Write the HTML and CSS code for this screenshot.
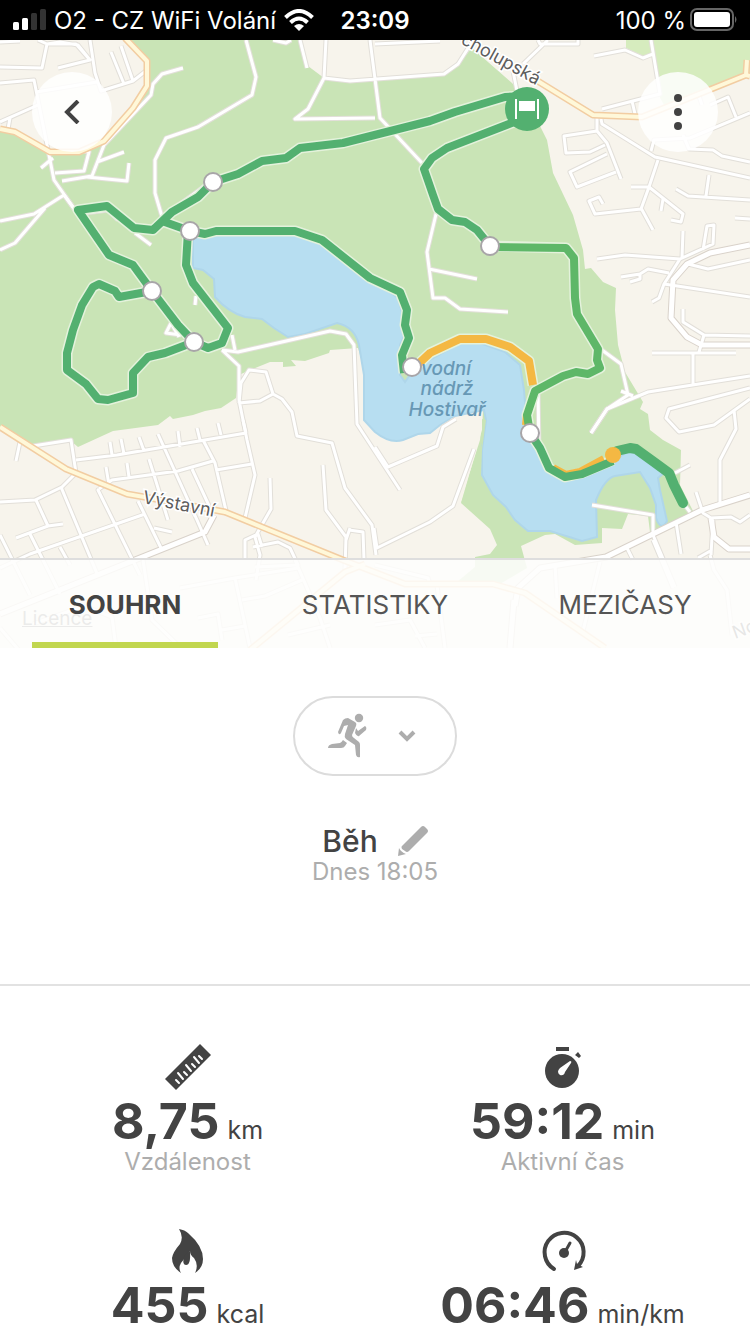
FILE: index.html
```html
<!DOCTYPE html>
<html lang="cs">
<head>
  <meta charset="UTF-8" />
  <meta name="viewport" content="width=device-width, initial-scale=1.0" />
  <title>Běh</title>
  <link rel="stylesheet" href="styles.css">
</head>
<body>
  <header class="status">
    <div class="status-left">
      <svg class="signal" viewBox="0 0 34 22" aria-hidden="true">
        <g fill="#fff"><rect x="1" y="13" width="6" height="8" rx="1.5" /><rect x="10" y="9" width="6" height="12" rx="1.5" /></g>
        <g fill="#333"><rect x="19" y="4" width="6" height="17" rx="1.5" /><rect x="28" y="0" width="6" height="21" rx="1.5" /></g>
      </svg>
      <span>O2 - CZ WiFi Volání</span>
      <svg class="wifi" viewBox="0 0 30 22" aria-hidden="true">
        <g fill="none" stroke="#fff" stroke-width="4">
          <path d="M1.5 8.5Q15-4.500 28.500 8.500" />
          <path d="M6.500 13.500Q15 5.500 23.500 13.500" />
        </g>
        <path d="M15 22L10 17Q15 13 20 17Z" fill="#fff" />
      </svg>
    </div>
    <strong class="clock">23:09</strong>
    <div class="status-right">
      <span>100 %</span>
      <svg class="battery" viewBox="0 0 48 24" aria-hidden="true">
        <rect x="1" y="1" width="42" height="21" rx="6" fill="none" stroke="#666" stroke-width="2" />
        <rect x="4" y="4" width="36" height="15" rx="3" fill="#fff" />
        <path d="M45 8Q48 11.500 45 15Z" fill="#666" />
      </svg>
    </div>
  </header>

  <section class="map">
    <svg class="map-canvas" viewBox="0 40 750 608" preserveAspectRatio="xMidYMid slice" role="img" aria-label="Mapa trasy">
      <defs>
        <g id="streets">
          <!-- north west -->
          <path d="M0 67L42 68L47 44L76 44L90 60M38 40L47 44L60 42L78 45L90 60L58 68M90 40L95 73L101 91L133 81L147 70M111 52L124 84M121 46L133 81M0 83L34 80L54 180L75 210M0 122L38 105M8 129L10 118M36 92L97 82M0 42L20 41" />
          <path d="M183 68L162 74L153 84L151 95L104 145L92 176L62 181M53 158L41 168M55 173L84 171L89 152L82 151M97 162L124 152M87 177L127 181L129 163M75 210L64 195L34 214L0 221M45 208L15 243L0 250M85 213L108 210L118 220M135 233L151 245M246 40L256 77L252 95L198 127L166 138L155 160L155 193L163 220M172 210L213 180M196 296L195 305" />
          <path d="M300 40L307 68M326 40L324 78L308 109L295 119L375 118M324 78L350 81L444 74L458 64L472 42M375 44L440 41M370 40L380 118L422 163M273 40L286 43L291 40M437 210L427 252L433 298L445 298L460 309L508 312M429 269L477 279M513 71L518 96" />
          <!-- lake side -->
          <path d="M222 350L238 352L330 331L346 334L354 345L357 424L400 490M222 350L239 366L239 400L247 440L255 475L245 518M232 335L235 350M239 403L260 401L273 394L266 372L249 370L241 383L239 403M273 394L282 399L292 412L297 436L332 443L345 488L372 525L376 555M171 323L166 333L181 335M171 323L179 337" />
          <path d="M375 447L388 467L437 446L443 427L456 419M474 449L453 506L430 522L377 548L374 528M538 390L539 450M602 350L621 364L628 395L607 409L591 433M621 391L633 396M592 505L653 515L653 535L675 587" />
          <!-- south west -->
          <path d="M16 461L20 442M33 446L71 440L76 473L62 487L35 500L0 502M76 460L117 455L246 433M110 442L112 455M121 439L124 454M139 437L144 451M158 434L197 520L208 545M178 431L180 447M197 428L200 440M218 423L221 435M203 440L215 463L227 515M243 420L246 433M106 467L109 485M127 463L129 477M149 459L168 520M99 489L112 480L178 471L213 461M192 469L212 512M216 470L252 464M323 465L326 510L346 537M270 478L271 509L255 537L260 555L256 580M245 560L245 540L258 534L262 547M253 547L278 542L290 548L298 565L255 567M346 537L345 570M350 528L346 540M349 530L363 532L364 560" />
          <path d="M99 489L98 490L140 575M138 501L162 550M36 500L48 526L63 524M48 526L16 538M30 534L60 594M61 487L98 576M0 535L30 595M0 568L30 554L145 514M60 547L70 565M154 528L172 532" />
          <path d="M143 560L152 620L181 648M0 628L23 655M33 624L84 606L112 617L116 648M180 588L235 578L298 568M235 578L250 648M242 600L265 596L302 580M295 560L320 618L330 648M198 618L218 614L222 640M222 630L245 626M288 635L330 625" />
          <path d="M375 565L428 578L430 585M437 585L445 648M375 625L410 620L425 648M415 636L437 634M555 565L557 598M600 562L582 635M653 540L673 588M710 555L714 570L727 590L732 635" />
          <!-- north east -->
          <path d="M523 64L548 40M538 40L540 44L578 44L578 40M594 56L625 50L643 58L653 54M651 40L660 94L602 109M632 101L635 114M597 118L597 131L607 143L621 179M597 131L564 136L566 153L590 152L605 145M607 154L570 172L577 187L616 172M601 119L602 124L655 157L750 178M651 151L654 140L690 138L750 113M683 135L689 149L713 150L722 156L750 162M710 105L728 97L736 117M699 96L702 105M658 160L649 187L641 209L595 214L589 201L599 197L603 204M631 187L649 187L683 214L681 222L671 220M641 208L653 230M663 199L661 211M709 175L706 196M676 189L688 196L750 200" />
          <path d="M597 259L625 255L680 259L713 244L714 225L707 226L703 250M682 258L683 231M680 259L664 284L659 298L652 302M664 284L750 297M688 264L708 269L750 260M621 277L640 274L648 269L669 273M640 275L640 279L630 282M735 218L750 219M683 309L683 322L704 335L750 336M704 335L699 352M652 353L736 353M693 353L693 384M591 433L607 409L648 392L750 376M750 388L669 409L666 418L679 432L714 425L750 399M734 410L736 429L720 460L720 503M675 473L690 465M696 492L703 513L711 518L731 517L740 522L750 515M676 522L681 554M627 548L633 560M711 555L713 520M698 558L712 550" />
          <path d="M690 512L683 503" />
        </g>
        <g id="streets-wide">
          <path d="M0 614L205 532L214 515M510 648L514 600M515 606L518 588L540 568L606 557L702 510L750 495M711 518L714 537L729 549L750 549M750 245L710 253L687 264L673 280L671 318L687 337L702 345L750 345" />
        </g>
        <g id="main-roads">
          <path d="M125 38L147 61L147 86L133 108L104 141L79 152L50 152L15 132L0 129M0 427L66 469L127 494L150 498L225 512L343 560L405 584L493 584L525 593L605 648M536 80L593 115L642 117L746 75L750 76M746 75L747 60M250 650L345 572L365 564" />
        </g>
      </defs>

      <rect x="0" y="40" width="750" height="608" fill="#f7f4ec" />
      <path fill="#c9e4b6" d="M125 40L147 61L147 86L133 108L104 141L79 152L50 152L15 132L0 129V427L32 447L71 441L78 447L113 431L158 425L170 416L173 419L193 415L205 411L221 408L236 398L239 375L250 370L270 362L283 362V367L296 366L291 360L305 361L329 353L330 350L358 348L370 390L483 410L482 430L461 503L490 529L497 545L490 554L475 557V567L457 582L500 584L527 568L521 546L545 535L555 534L575 545L602 543V528L622 529L628 514L648 516L650 532L694 513L680 485L681 450L663 440L650 430L648 414L640 409L643 402L625 372L618 345L615 310L616 288L603 282L591 268L585 269L583 250L573 215L553 173L547 140L527 100L512 83L472 48L458 64L444 74L350 82L324 78L308 66L300 40Z" />
      <path fill="#d6ecbe" d="M626 40H750V76L664 105L658 94L653 55L645 57L626 48Z" />
      <path class="water" d="M193 235V268L203 270L214 279L215 297Q228 312 245 317L262 319L274 328L288 337L305 334L337 323Q355 327 359 345L364 375L364 420L375 432Q390 444 403 440L418 434L430 433L440 425L455 416L484 410L486 420L482 450V475L493 495L506 507L515 520L528 531L550 531L582 541L597 537L596 500Q605 478 615 476L640 472L650 488L656 505V518Q661 532 667 521L660 490L658 478L665 472L650 460L630 450L612 462L590 473L565 480L550 470L537 440L527 428L524 390L520 365L505 352L480 343H460L430 360L412 372L405 382L400 375V345L407 330L398 298L365 275L322 243L290 234Z" />
      <path d="M438 434L452 418L482 420L480 440L460 503L440 500L430 450Z" fill="#f7f4ec" />
      <path d="M482 419V445L461 503L481 475L482 450L486 420Z" fill="#c9e4b6" />

      <use href="#streets" class="road-case" />
      <use href="#streets-wide" class="road-case wide" />
      <use href="#streets" class="road" />
      <use href="#streets-wide" class="road wide" />
      <use href="#main-roads" class="main-case" />
      <use href="#main-roads" class="main-road" />

      <!-- recorded track -->
      <g class="track-glow">
        <path d="M530 433L527 415L535 391L563 376L576 372L588 374L600 368L597 360L598 349L577 314L575 298L574 258L566 248L490 246L477 230L465 222L452 220L438 209L433 195L424 169L432 158L447 148L527 117" />
        <path d="M527 96L505 97L455 112L430 121L343 143L300 148L286 158L262 161L238 174L213 182L198 197L172 212L153 230L134 228L107 206L78 210L109 255L133 265L152 291L178 325L194 342L208 348L222 343L228 328L193 283L186 265L188 231" />
        <path d="M162 221L190 231L205 234L216 231H295L322 240L370 278L400 292L407 310L405 325L409 338L402 355L404 373M152 291L119 297L115 291L99 284L93 287L82 305L73 330L67 353V370L86 384L98 399L108 400L133 393V373L148 357L165 353L194 342" />
        <path d="M414 368L430 353L460 339H486L510 347L529 361L533 385M530 433L540 448L549 468L565 477L582 473L613 460" />
      </g>
      <g class="track">
        <path d="M414 368L430 353L460 339H486L510 347L529 361L533 385M527 414L526 425M553 468L566 475L580 472L604 459" class="slow" />
        <path d="M530 433L527 415L535 391L563 376L576 372L588 374L600 368L597 360L598 349L577 314L575 298L574 258L566 248L490 247" class="fast" />
        <path d="M490 246L477 230L465 222L452 220L438 209L433 195L424 169L432 158L447 148L527 117M527 96L505 97L455 112L430 121L343 143L300 148L286 158L262 161L238 174L213 182L198 197L172 212L153 230L134 228L107 206L78 210L109 255L133 265L152 291L178 325L194 342L208 348L222 343L228 328L193 283L186 265L188 231" />
        <path d="M162 221L190 231L205 234L216 231H295L322 240L370 278L400 292L407 310L405 325L409 338L402 355L404 373M152 291L119 297L115 291L99 284L93 287L82 305L73 330L67 353V370L86 384L98 399L108 400L133 393V373L148 357L165 353L194 342" />
        <path d="M530 433L540 448L549 468L565 477L582 474L613 461" />
        <path d="M617 451L630 448L636 449L654 462L669 473L674 485L683 503" class="finish" />
      </g>

      <g class="map-label">
        <text transform="translate(460 43) rotate(29)">cholupská</text>
        <text transform="translate(142 503) rotate(11)">Výstavní</text>
        <text transform="translate(735 639) rotate(-20)">Nová</text>
      </g>
      <g class="water-label">
        <text x="446" y="375">vodní</text>
        <text x="447" y="395">nádrž</text>
        <text x="447" y="416">Hostivař</text>
      </g>

      <g fill="#fff" stroke="#a8a5a8" stroke-width="2">
        <circle cx="213" cy="182" r="9" />
        <circle cx="190" cy="231" r="9" />
        <circle cx="152" cy="291" r="9" />
        <circle cx="194" cy="342" r="9" />
        <circle cx="412" cy="367" r="9" />
        <circle cx="490" cy="246" r="9" />
        <circle cx="530" cy="433" r="9" />
      </g>
      <circle cx="613" cy="455" r="8" fill="#f4b843" />
      <circle cx="527" cy="109" r="22" fill="#53b070" />
      <path d="M515 99h2v20h-2zM537 99h2v20h-2zM519 101h16v10h-16z" fill="#fff" />
    </svg>
    <a class="licence" href="#">Licence</a>

    <button class="round-btn back" aria-label="Zpět">
      <svg viewBox="0 0 24 24"><path d="M18 1L7 12L18 23" fill="none" stroke="#424242" stroke-width="4" /></svg>
    </button>
    <button class="round-btn more" aria-label="Více">
      <svg viewBox="0 0 8 36" fill="#424242"><circle cx="4" cy="4" r="4" /><circle cx="4" cy="18" r="4" /><circle cx="4" cy="32" r="4" /></svg>
    </button>

    <nav class="tabs">
      <button class="tab active">SOUHRN</button>
      <button class="tab">STATISTIKY</button>
      <button class="tab">MEZIČASY</button>
    </nav>
  </section>

  <main>
    <section class="activity">
      <button class="sport" aria-label="Vybrat sport" aria-haspopup="listbox">
        <svg class="runner" viewBox="0 0 40 46" fill="#adadad">
          <circle cx="31" cy="5" r="4.200" />
          <path d="M15 7Q17 5 20 5L27 9Q29 10 28 13L24 22Q24 24 26 25L31 29Q32 30 32 32V44Q29 45 28 42L27 32L18 26Q16 24 17 21L20 12L16 13L13 20Q11 23 10 19Z" />
          <path d="M28 15L30 18L37 13Q39 14 38 17L31 23Q29 24 27 20Z" />
          <path d="M15 27L19 30L17 33Q16 35 13 35H0Q0 32 4 31L12 30Q13 30 15 27Z" />
        </svg>
        <svg class="chevron" viewBox="0 0 18 12"><path d="M2 2L9 9L16 2" fill="none" stroke="#adadad" stroke-width="4" /></svg>
      </button>
      <div class="title-row">
        <h1>Běh</h1>
        <button class="edit" aria-label="Upravit název">
          <svg viewBox="0 0 30 30" fill="#adadad"><path d="M4 20L23 1Q25-1 27 1L29 3Q31 5 29 7L11 25Q9 27 7 25L4 23Q3 21 4 20Z" /><path d="M1 22Q3 26 8 28L0 30Z" /></svg>
        </button>
      </div>
      <p class="date">Dnes 18:05</p>
    </section>

    <section class="stats">
      <div class="stat">
        <svg class="stat-icon" viewBox="0 0 48 48">
          <path d="M36 0L47 11L12 46L1 35Z" fill="#434343" />
          <path d="M12 36L15 39M14 29L19 35M20 28L23 31M22 21L27 27M28 20L31 23M30 13L35 19M35 12L38 15" stroke="#fff" stroke-width="2" stroke-linecap="round" />
        </svg>
        <p class="value"><strong>8,75</strong> <span>km</span></p>
        <p class="label">Vzdálenost</p>
      </div>
      <div class="stat">
        <svg class="stat-icon" viewBox="0 0 48 48">
          <g fill="#434343"><circle cx="23" cy="27" r="17" /><path d="M17 3H30V7H17ZM36 11L39 8L42 12L40 14Z" /></g>
          <path d="M21 24L31 17Q33 17 32 19L26 28Q25 32 21 31Q17 28 21 24Z" fill="#fff" />
        </svg>
        <p class="value"><strong>59:12</strong> <span>min</span></p>
        <p class="label">Aktivní čas</p>
      </div>
      <div class="stat">
        <svg class="stat-icon" viewBox="0 0 48 48">
          <path d="M15 1Q21 2 24 5Q39 18 39 31Q39 40 31 45Q35 37 30 30Q26 27 26 23Q22 29 17 35Q14 40 17 45Q8 39 8 30Q9 24 16 16Q20 9 15 1Z" fill="#434343" />
          <path d="M20 29Q18 37 22 37Q27 37 26 23Q22 25 20 29Z" fill="#434343" />
        </svg>
        <p class="value"><strong>455</strong> <span>kcal</span></p>
      </div>
      <div class="stat">
        <svg class="stat-icon" viewBox="0 0 48 48">
          <path d="M15 41A19.500 19.500 0 1 1 39 38" fill="none" stroke="#434343" stroke-width="4" stroke-linecap="round" />
          <path d="M37 32L38 36L44 39L35 42Z" fill="#434343" />
          <circle cx="25" cy="25" r="5" fill="#434343" />
          <path d="M26 24L31 15" stroke="#434343" stroke-width="3" stroke-linecap="round" />
        </svg>
        <p class="value"><strong>06:46</strong> <span>min/km</span></p>
      </div>
    </section>
  </main>
</body>
</html>
```

FILE: styles.css
```css
* {
  box-sizing: border-box;
  margin: 0;
  padding: 0;
}

body {
  font-family: Inter, "Open Sans", sans-serif;
  background: #fff;
  color: #434343;
}

button {
  border: none;
  background: none;
  font: inherit;
  color: inherit;
  cursor: pointer;
}

svg {
  display: block;
}

/* status bar */
.status {
  display: grid;
  grid-template-columns: 1fr auto 1fr;
  align-items: center;
  height: 40px;
  padding: 0 12px;
  background: #000;
  color: #fff;
  font-size: 24px;
}

.status-left,
.status-right {
  display: flex;
  align-items: center;
  gap: 8px;
  white-space: nowrap;
}

.status-right {
  justify-content: flex-end;
  gap: 4px;
}

.clock {
  font-weight: 600;
}

.signal {
  width: 34px;
  height: 22px;
}

.wifi {
  width: 30px;
  height: 22px;
}

.battery {
  width: 48px;
  height: 24px;
}

/* map */
.map {
  position: relative;
}

.map-canvas {
  width: 100%;
  height: 608px;
}

.water {
  fill: #b7def1;
  stroke: #afd6ea;
  stroke-width: 2;
}

.road-case,
.road,
.main-case,
.main-road {
  fill: none;
  stroke-linejoin: round;
}

.road-case {
  stroke: #e2dfd9;
  stroke-width: 5;
}

.road {
  stroke: #fff;
  stroke-width: 3;
}

.road-case.wide {
  stroke: #d9d2ca;
  stroke-width: 7;
}

.road.wide {
  stroke-width: 5;
}

.main-case {
  stroke: #f2cda2;
  stroke-width: 7;
}

.main-road {
  stroke: #fff8d9;
  stroke-width: 4;
}

.track-glow,
.track {
  fill: none;
  stroke-linejoin: round;
}

.track-glow {
  stroke: #e4f2dc;
  stroke-width: 11;
}

.track {
  stroke: #53b070;
  stroke-width: 8;
}

.slow {
  stroke: #f4b843;
}

.fast {
  stroke: #5eb768;
}

.finish {
  stroke-width: 10;
  stroke-linecap: round;
}

.map-label {
  font-size: 18px;
  fill: #5d5d5d;
  stroke: #fff;
  stroke-width: 3;
  paint-order: stroke;
}

.water-label {
  font-size: 19px;
  font-style: italic;
  font-weight: 500;
  text-anchor: middle;
  fill: #6798b5;
}

.licence {
  position: absolute;
  left: 22px;
  bottom: 18px;
  font-size: 19px;
  color: #777;
}

.round-btn {
  position: absolute;
  top: 32px;
  display: flex;
  align-items: center;
  justify-content: center;
  width: 80px;
  height: 80px;
  border-radius: 50%;
  background: rgba(255, 255, 255, 0.85);
}

.back {
  left: 32px;
}

.back svg {
  width: 24px;
}

.more {
  right: 32px;
}

.more svg {
  height: 36px;
}

.tabs {
  position: absolute;
  left: 0;
  right: 0;
  bottom: 0;
  display: flex;
  gap: 64px;
  height: 90px;
  padding: 0 32px;
  border-top: 2px solid #dedede;
  background: rgba(254, 254, 253, 0.86);
}

.tab {
  flex: 1 1 0;
  min-width: 0;
  padding-top: 6px;
  border-bottom: 6px solid transparent;
  font-size: 26px;
  color: #555;
}

.tab.active {
  border-color: #c1d64f;
  font-weight: 700;
  color: #434343;
}

/* activity */
.activity {
  display: flex;
  flex-direction: column;
  align-items: center;
  padding: 48px 32px 98px;
  border-bottom: 2px solid #e2e2e2;
}

.sport {
  display: flex;
  align-items: center;
  justify-content: center;
  gap: 30px;
  width: 164px;
  height: 80px;
  padding-right: 6px;
  border: 2px solid #dcdcdc;
  border-radius: 40px;
}

.runner {
  width: 40px;
  height: 46px;
}

.chevron {
  width: 18px;
  height: 12px;
}

.title-row {
  display: flex;
  align-items: center;
  gap: 20px;
  margin-top: 48px;
}

h1 {
  font-size: 30px;
  font-weight: 500;
  line-height: 34px;
}

.edit svg {
  width: 30px;
  height: 30px;
}

.date {
  font-size: 24px;
  line-height: 28px;
  color: #adadad;
}

/* stats */
.stats {
  display: grid;
  grid-template-columns: 1fr 1fr;
  row-gap: 54px;
  padding-top: 58px;
}

.stat {
  display: flex;
  flex-direction: column;
  align-items: center;
}

.stat-icon {
  width: 48px;
  height: 48px;
}

.value {
  display: flex;
  align-items: baseline;
  gap: 8px;
  font-size: 25px;
  line-height: 28px;
}

.value strong {
  font-size: 50px;
  line-height: 58px;
}

.label {
  font-size: 24px;
  line-height: 24px;
  color: #adadad;
}
```
